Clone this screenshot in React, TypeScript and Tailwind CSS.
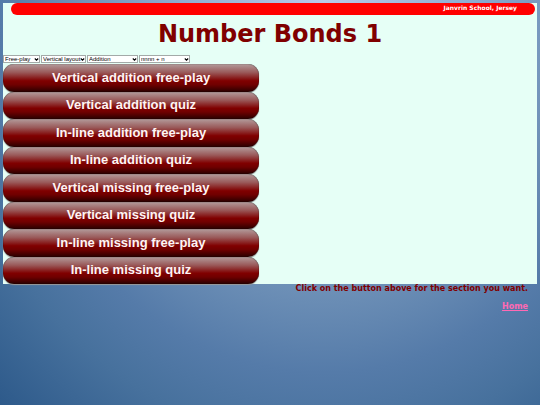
const menus = [
  { label: "Mode", width: "w-[37px]", options: ["Free-play", "Quiz"] },
  { label: "Layout", width: "w-[45px]", options: ["Vertical layout", "In-line layout"] },
  { label: "Operation", width: "w-[51px]", options: ["Addition", "Missing number"] },
  { label: "Number pattern", width: "w-[51px]", options: ["nnnn + n", "nnn + n"] },
];

const sections = [
  "Vertical addition free-play",
  "Vertical addition quiz",
  "In-line addition free-play",
  "In-line addition quiz",
  "Vertical missing free-play",
  "Vertical missing quiz",
  "In-line missing free-play",
  "In-line missing quiz",
];

type MenuProps = { label: string; width: string; options: string[] };

function Menu({ label, width, options }: MenuProps) {
  return (
    <div className={`relative h-2 ${width}`}>
      <select
        aria-label={label}
        className="block h-2 w-full appearance-none border border-[#a3aaa8] bg-white pl-px font-['Liberation_Sans',Arial,sans-serif] text-[6px] leading-[6px] font-normal text-black"
      >
        {options.map((option) => (
          <option key={option}>{option}</option>
        ))}
      </select>
      <svg
        viewBox="0 0 5 3"
        className="pointer-events-none absolute top-[3px] right-px h-[3px] w-[5px]"
        fill="none"
        stroke="#000"
        strokeWidth="1.1"
        aria-hidden="true"
      >
        <path d="M0.8 0.5 L2.5 2.2 L4.2 0.5" />
      </svg>
    </div>
  );
}

export default function App() {
  return (
    <div className="min-h-screen bg-[radial-gradient(ellipse_75%_115%_at_60%_0%,#b9c9ea_0%,#8fadd2_35%,#7092b8_60%,#557ba9_80%,#47719d_95%,#265385_125%)] px-[3px] pt-[3px] font-['DejaVu_Sans',Verdana,sans-serif] font-bold">
      <main className="bg-[#e6fff6]">
        <header className="mr-[2px] ml-2 h-3 rounded-full bg-[#ff0000] pr-[18px] text-right text-[6px] leading-[10px] text-white">
          Janvrin School, Jersey
        </header>
        <h1 className="h-10 pt-1 text-center text-[24px] leading-[30px] text-[#800000]">
          Number Bonds 1
        </h1>
        <div className="flex gap-px pb-px">
          {menus.map((menu) => (
            <Menu key={menu.label} {...menu} />
          ))}
        </div>
        <div className="grid h-[220px] max-w-[256px] auto-rows-fr">
          {sections.map((section) => (
            <button
              key={section}
              type="button"
              className="rounded-[11px] bg-[linear-gradient(to_bottom,#b39c9c_0%,#9a5a5a_30%,#800000_60%,#700000_74%,#280000_100%)] font-['Liberation_Sans',Arial,sans-serif] text-[13px] leading-[16px] font-bold text-[#fff4f4] shadow-[inset_0_0_1px_#000,0_1px_1px_#999]"
            >
              {section}
            </button>
          ))}
        </div>
      </main>
      <footer className="flex flex-col items-end gap-2 pr-[9px] text-[8px] leading-[10px] text-[#800000]">
        <p>Click on the button above for the section you want.</p>
        <a href="#home" className="text-[#ff69b4] underline">
          Home
        </a>
      </footer>
    </div>
  );
}
